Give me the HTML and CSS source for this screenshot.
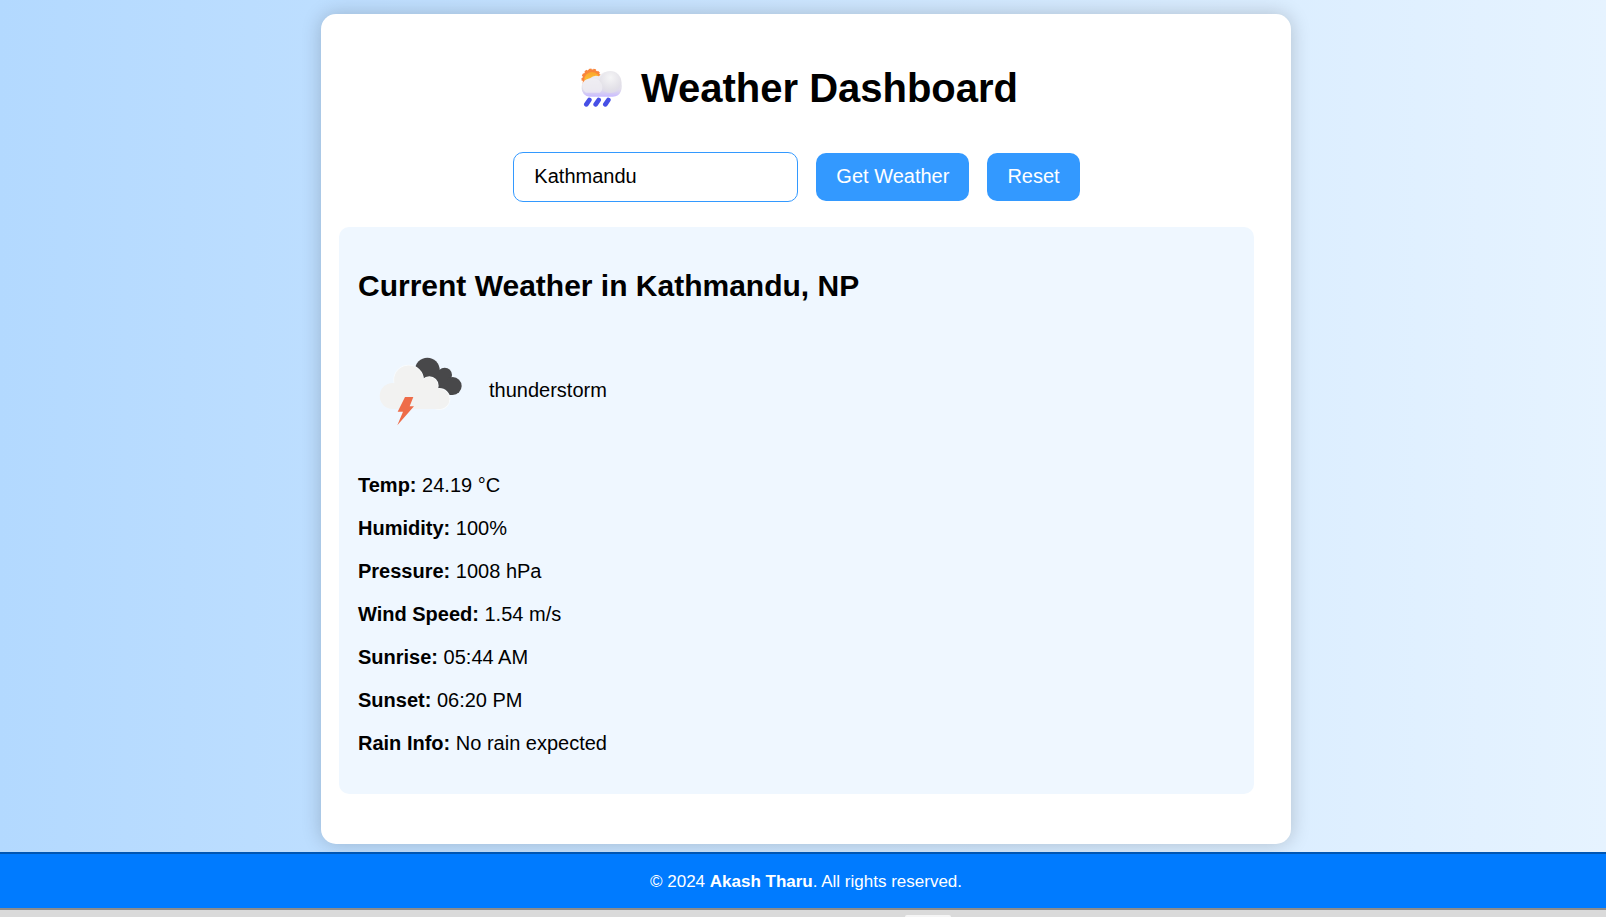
FILE: index.html
```html
<!DOCTYPE html>
<html lang="en">
<head>
<meta charset="utf-8">
<meta name="viewport" content="width=device-width, initial-scale=1">
<title>Weather Dashboard</title>
<link rel="stylesheet" href="styles.css">
</head>
<body>
<main class="page">
  <div class="card">
    <h1 class="title">
      <svg class="title-icon" viewBox="65 52 123 117" aria-hidden="true">
        <defs>
          <linearGradient id="sun" x1="0" y1="0" x2="0" y2="1"><stop offset="0" stop-color="#fba52c"/><stop offset="1" stop-color="#ffd83c"/></linearGradient>
          <radialGradient id="puff" cx=".5" cy=".3" r=".75"><stop offset="0" stop-color="#f5f5f6"/><stop offset=".7" stop-color="#e3e1e8"/><stop offset="1" stop-color="#dcd8ea"/></radialGradient>
          <linearGradient id="base" x1="0" y1="0" x2="0" y2="1"><stop offset="0" stop-color="#f1f0f3"/><stop offset=".7" stop-color="#e2dfea"/><stop offset="1" stop-color="#c9bbff"/></linearGradient>
        </defs>
        <circle cx="97" cy="84" r="28" fill="#f9853b" stroke="#f9853b" stroke-width="5" stroke-dasharray="8 5.6"/>
        <circle cx="98" cy="87" r="23" fill="url(#sun)"/>
        <path d="M92 83a27 27 0 0 1 27-6c10-18 38-17 53-7 14 11 19 34 13 51-4 11-12 17-25 17H91a25 25 0 0 1-24-27c0-15 10-25 25-28z" fill="url(#base)"/>
        <circle cx="153" cy="94" r="33" fill="url(#puff)"/>
        <path d="M75 90c14-10 44-10 50 7 7 11 5 22-3 29H80c-12-9-14-25-5-36z" fill="#f1f0f5" opacity=".65"/>
        <g stroke="#4750e6" stroke-width="14" stroke-linecap="round"><path d="M90 148l-9 13M118 148l-9 13M147 148l-9 13"/></g>
      </svg>
      <span>Weather Dashboard</span>
    </h1>
    <form class="search">
      <input class="city" type="text" value="Kathmandu" aria-label="City">
      <button class="btn" type="button">Get Weather</button>
      <button class="btn" type="reset">Reset</button>
    </form>
    <section class="panel">
      <h2 class="heading">Current Weather in Kathmandu, NP</h2>
      <div class="condition">
        <svg class="condition-icon" viewBox="-6 -30 360 360" aria-hidden="true">
          <g fill="#48484a">
            <circle cx="202" cy="90" r="37"/>
            <circle cx="254" cy="105" r="22"/>
            <circle cx="278" cy="138" r="27"/>
            <path d="M180 90h70l28 75h-60z"/>
          </g>
          <g fill="#f2f2f1" stroke="#f8fbfd" stroke-width="6" paint-order="stroke">
            <circle cx="208" cy="137" r="25"/>
            <circle cx="238" cy="177" r="30"/>
            <circle cx="146" cy="120" r="43"/>
          </g>
          <g fill="#f2f2f1">
            <circle cx="98" cy="168" r="39"/>
            <circle cx="146" cy="120" r="43"/>
            <circle cx="208" cy="137" r="25"/>
            <circle cx="238" cy="177" r="30"/>
            <path d="M98 207V140l110-15 30 22v60z"/>
          </g>
          <path d="M135 171h25l-11 28h13l-50 57 17-41h-16z" fill="#ee6c49"/>
        </svg>
        <span>thunderstorm</span>
      </div>
      <p class="fact"><strong>Temp:</strong> 24.19 °C</p>
      <p class="fact"><strong>Humidity:</strong> 100%</p>
      <p class="fact"><strong>Pressure:</strong> 1008 hPa</p>
      <p class="fact"><strong>Wind Speed:</strong> 1.54 m/s</p>
      <p class="fact"><strong>Sunrise:</strong> 05:44 AM</p>
      <p class="fact"><strong>Sunset:</strong> 06:20 PM</p>
      <p class="fact"><strong>Rain Info:</strong> No rain expected</p>
    </section>
  </div>
</main>
<footer class="footer">© 2024 <strong>Akash Tharu</strong>. All rights reserved.</footer>
<div class="dock"><div class="dock-tab"></div></div>
</body>
</html>
```
FILE: styles.css
```css
* {
  box-sizing: border-box;
}

body {
  margin: 0;
  min-height: 100vh;
  display: flex;
  flex-direction: column;
  background: linear-gradient(to right, #b3d9ff, #e6f3ff);
  font-family: "Liberation Sans", Arial, sans-serif;
  font-size: 20px;
  line-height: 23px;
  color: #000;
}

.page {
  flex: 1;
  padding: 14px 0 8px 6px;
}

.card {
  max-width: 970px;
  margin: 0 auto;
  padding: 51px 37px 50px 18px;
  background: #fff;
  border-radius: 15px;
  box-shadow: 0 0 20px rgba(0, 0, 0, 0.2);
}

.title {
  display: flex;
  justify-content: center;
  align-items: center;
  gap: 19px;
  margin: 0 0 41px;
  padding-left: 6px;
  font-size: 40px;
  line-height: 46px;
}

.title-icon {
  width: 41px;
  height: 39px;
  margin-bottom: 2px;
}

.search {
  display: flex;
  flex-wrap: wrap;
  justify-content: center;
  align-items: center;
  gap: 18px;
  margin-bottom: 25px;
}

.city {
  width: 285px;
  height: 50px;
  padding: 0 20px 2px;
  border: 1px solid #3399ff;
  border-radius: 10px;
  background: #fff;
  font: inherit;
  color: inherit;
}

.btn {
  height: 48px;
  padding: 0 20px 2px;
  border: 0;
  border-radius: 10px;
  background: #3399ff;
  color: #fff;
  font: inherit;
  cursor: pointer;
}

.panel {
  padding: 42px 19px 39px;
  border-radius: 10px;
  background: #eff7ff;
}

.heading {
  margin: 0 0 27px;
  font-size: 30px;
  line-height: 34px;
}

.condition {
  display: flex;
  align-items: center;
  gap: 11px;
  margin-bottom: 24px;
}

.condition-icon {
  width: 120px;
  height: 120px;
}

.fact {
  margin: 0 0 20px;
}

.fact:last-child {
  margin-bottom: 0;
}

.footer {
  padding: 17px 0 16px 6px;
  border-top: 2px solid #0056b3;
  background: #007bff;
  color: #fff;
  font-size: 17px;
  line-height: 21px;
  text-align: center;
}

.dock {
  display: flex;
  justify-content: center;
  height: 9px;
  padding: 5px 0 0 250px;
  border-top: 2px solid #8c8c8c;
  background: #dadada;
}

.dock-tab {
  width: 46px;
  border-radius: 3px 3px 0 0;
  background: #f5f5f5;
}
```
